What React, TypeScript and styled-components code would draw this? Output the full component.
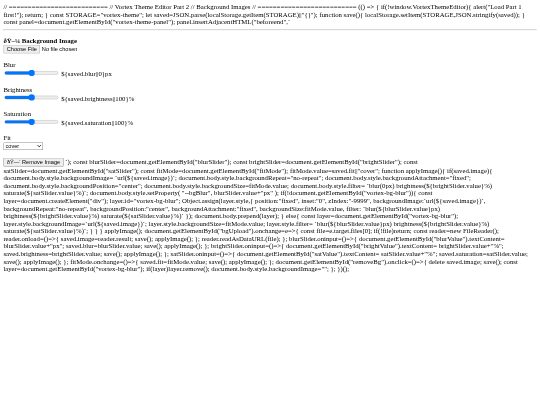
import { createGlobalStyle, styled } from 'styled-components';

const GlobalStyle = createGlobalStyle`
  html, body {
    margin: 0;
    background: #fff;
  }
  #root {
    width: 540px;
    height: 405px;
    overflow: hidden;
  }
`;

// the whole page was captured at 1280x960 and shrunk to 540x405
const Page = styled.div`
  box-sizing: border-box;
  width: 1280px;
  height: 960px;
  padding: 8px;
  font-family: "Liberation Serif", "Times New Roman", serif;
  font-size: 16px;
  color: #000;
  transform: scale(0.421875);
  transform-origin: 0 0;
  filter: blur(0.7px);
`;

const Rule = styled.hr`
  margin: 8px 0 16px;
`;

const Title = styled.b`
  font-weight: 700;
`;

const Label = styled.label``;

const FitSelect = styled.select`
  width: 94px;
`;

const BAR = '==========================';

const HEAD_TEXT = `// ${BAR} // Vortex Theme Editor Part 2 // Background Images // ${BAR} (() => { if(!window.VortexThemeEditor){ alert("Load Part 1 first!"); return; } const STORAGE="vortex-theme"; let saved=JSON.parse(localStorage.getItem(STORAGE)||"{}"); function save(){ localStorage.setItem(STORAGE,JSON.stringify(saved)); } const panel=document.getElementById("vortex-theme-panel"); panel.insertAdjacentHTML("beforeend",\``;

const TAIL_TEXT = ` \`); const blurSlider=document.getElementById("blurSlider"); const brightSlider=document.getElementById("brightSlider"); const satSlider=document.getElementById("satSlider"); const fitMode=document.getElementById("fitMode"); fitMode.value=saved.fit||"cover"; function applyImage(){ if(saved.image){ document.body.style.backgroundImage= \`url(\${saved.image})\`; document.body.style.backgroundRepeat="no-repeat"; document.body.style.backgroundAttachment="fixed"; document.body.style.backgroundPosition="center"; document.body.style.backgroundSize=fitMode.value; document.body.style.filter= \`blur(0px) brightness(\${brightSlider.value}%) saturate(\${satSlider.value}%)\`; document.body.style.setProperty( "--bgBlur", blurSlider.value+"px" ); if(!document.getElementById("vortex-bg-blur")){ const layer=document.createElement("div"); layer.id="vortex-bg-blur"; Object.assign(layer.style,{ position:"fixed", inset:"0", zIndex:"-9999", backgroundImage:\`url(\${saved.image})\`, backgroundRepeat:"no-repeat", backgroundPosition:"center", backgroundAttachment:"fixed", backgroundSize:fitMode.value, filter: \`blur(\${blurSlider.value}px) brightness(\${brightSlider.value}%) saturate(\${satSlider.value}%)\` }); document.body.prepend(layer); } else{ const layer=document.getElementById("vortex-bg-blur"); layer.style.backgroundImage=\`url(\${saved.image})\`; layer.style.backgroundSize=fitMode.value; layer.style.filter= \`blur(\${blurSlider.value}px) brightness(\${brightSlider.value}%) saturate(\${satSlider.value}%)\`; } } } applyImage(); document.getElementById("bgUpload").onchange=e=>{ const file=e.target.files[0]; if(!file)return; const reader=new FileReader(); reader.onload=()=>{ saved.image=reader.result; save(); applyImage(); }; reader.readAsDataURL(file); }; blurSlider.oninput=()=>{ document.getElementById("blurValue").textContent= blurSlider.value+"px"; saved.blur=blurSlider.value; save(); applyImage(); }; brightSlider.oninput=()=>{ document.getElementById("brightValue").textContent= brightSlider.value+"%"; saved.brightness=brightSlider.value; save(); applyImage(); }; satSlider.oninput=()=>{ document.getElementById("satValue").textContent= satSlider.value+"%"; saved.saturation=satSlider.value; save(); applyImage(); }; fitMode.onchange=()=>{ saved.fit=fitMode.value; save(); applyImage(); }; document.getElementById("removeBg").onclick=()=>{ delete saved.image; save(); const layer=document.getElementById("vortex-bg-blur"); if(layer)layer.remove(); document.body.style.backgroundImage=""; }; })();`;

const SLIDERS = [
  { label: 'Blur', value: '${saved.blur||0}px' },
  { label: 'Brightness', value: '${saved.brightness||100}%' },
  { label: 'Saturation', value: '${saved.saturation||100}%' },
];

function App() {
  return (
    <Page>
      <GlobalStyle />
      {HEAD_TEXT}
      <Rule />
      <Title>ðŸ–¼ Background Image</Title>
      <br />
      <input type="file" />
      <br />
      <br />
      {SLIDERS.map((s) => (
        <Label key={s.label}>
          {s.label}
          <br />
          <input type="range" defaultValue={50} /> {s.value}
          <br />
          <br />
        </Label>
      ))}
      <Label>
        Fit
        <br />
        <FitSelect defaultValue="cover">
          <option value="cover">cover</option>
          <option value="contain">contain</option>
        </FitSelect>
      </Label>
      <br />
      <br />
      <button type="button">ðŸ—‘ Remove Image</button>
      {TAIL_TEXT}
    </Page>
  );
}

export default App;
